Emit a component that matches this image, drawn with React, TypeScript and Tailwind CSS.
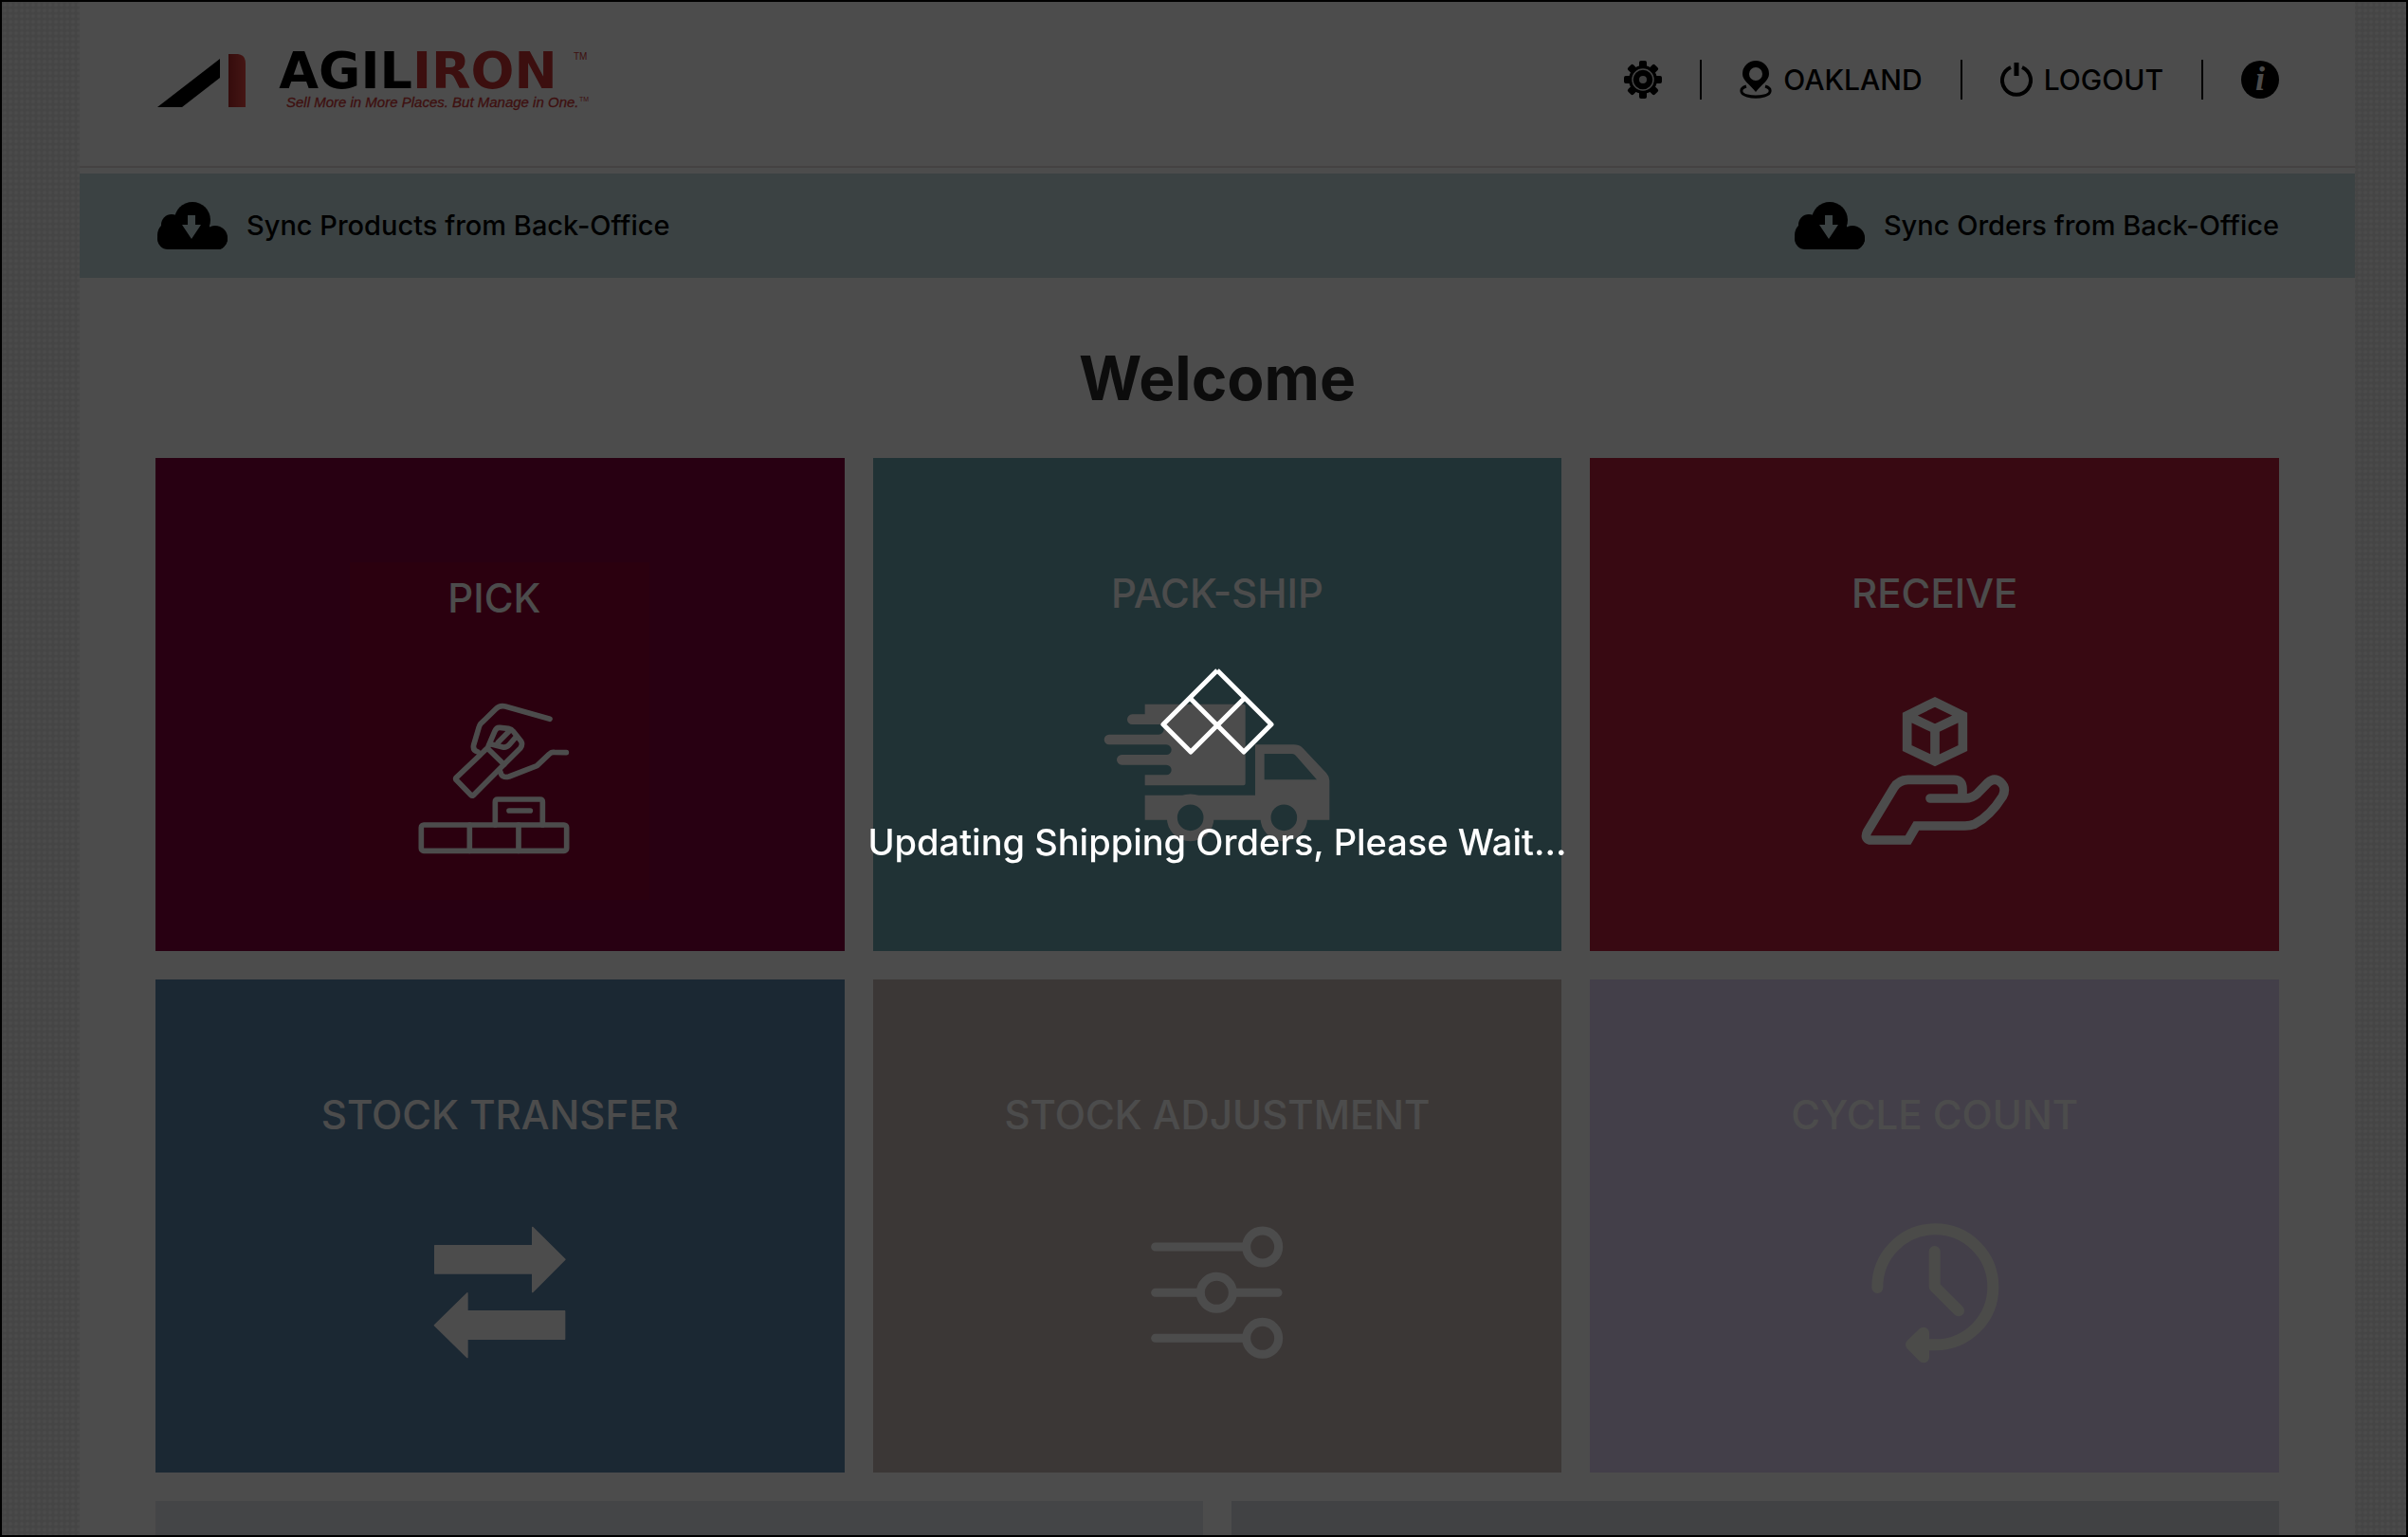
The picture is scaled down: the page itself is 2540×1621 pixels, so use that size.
import React from "react";

type Tile = {
    id: number;
    name: string;
    color: string;
    icon: React.ReactNode;
};

const CloudIcon = () => (
    <svg className="w-[76px] h-[50px]" viewBox="-2 0 76 50" aria-hidden="true">
        <circle cx="37" cy="19" r="19" />
        <circle cx="15" cy="24" r="11" />
        <circle cx="15" cy="35" r="15" />
        <circle cx="61" cy="38" r="13" />
        <rect x="0" y="28" width="74" height="22" rx="11" />
        <rect x="15" y="20" width="40" height="30" />
        <path d="M32 14H40V24H46L36 39L26 24H32Z" fill="#c5dcdf" />
    </svg>
);

const GearIcon = () => (
    <svg className="w-10 h-10" viewBox="0 0 40 40" aria-hidden="true">
        {[0, 45, 90, 135].map((deg) => (
            <rect key={deg} x="16" y="0" width="8" height="40" rx="2" transform={`rotate(${deg} 20 20)`} />
        ))}
        <circle cx="20" cy="20" r="15" />
        <circle cx="20" cy="20" r="11" fill="none" stroke="#e2e2e2" strokeWidth="1.5" />
        <circle cx="20" cy="20" r="4" fill="#d2d2d2" />
    </svg>
);

const PinIcon = () => (
    <svg className="w-[34px] h-10" viewBox="0 0 34 40" aria-hidden="true">
        <path d="M7 27C0 29 0 35 8 37C14 38.500 20 38.500 26 37C34 35 34 29 27 27" fill="none" stroke="#000" strokeWidth="3" />
        <path fillRule="evenodd" d="M17 0A14 14 0 0 1 31 14C31 21 23 25 17 33C11 25 3 21 3 14A14 14 0 0 1 17 0ZM17 7A7 7 0 1 0 17 21A7 7 0 1 0 17 7Z" />
    </svg>
);

const PowerIcon = () => (
    <svg className="w-[34px] h-9" viewBox="0 0 34 36" fill="none" stroke="#000" aria-hidden="true">
        <path d="M11 5A15 15 0 1 0 23 5" strokeWidth="4" />
        <path d="M17 0V14" strokeWidth="5" />
    </svg>
);

const InfoIcon = () => (
    <svg className="w-10 h-10" viewBox="0 0 40 40" aria-hidden="true">
        <circle cx="20" cy="20" r="20" />
        <text x="20" y="31" textAnchor="middle" fill="#fff" className="font-['Liberation_Serif',serif] font-bold italic text-[36px]">i</text>
    </svg>
);

const Logo = () => (
    <svg className="w-[460px] h-16 overflow-visible" viewBox="0 0 460 64" role="img" aria-label="Agiliron">
        <defs>
            <linearGradient id="bar" x1="0" x2="1" y1="0" y2="0">
                <stop offset="0" stopColor="#b02828" />
                <stop offset="1" stopColor="#e84c46" />
            </linearGradient>
        </defs>
        <path d="M2 61L68 10V30L28 61Z" />
        <path d="M77 5H87Q95 6 95 15V61H77Z" fill="url(#bar)" />
        <text x="277" y="41" textAnchor="middle" className="font-['DejaVu_Sans',sans-serif] font-bold text-[54px]">
            AGIL<tspan fill="#c83232">IRON</tspan>
        </text>
        <g className="font-['Liberation_Sans',sans-serif]" fill="#d03636">
            <text x="441" y="11" className="text-[10px]">TM</text>
            <text x="138" y="61" className="italic text-[15px]" stroke="#d03636" strokeWidth="0.3">Sell More in More Places. But Manage in One.</text>
            <text x="447" y="55" className="text-[7px]">TM</text>
        </g>
    </svg>
);

const PickIcon = () => (
    <svg className="w-40 h-40 overflow-visible" viewBox="304 477 480 480" fill="none" stroke="#fff" strokeWidth="17" strokeLinecap="round" strokeLinejoin="round" aria-hidden="true">
        <path d="M721 538L580 498Q562 494 550 506L502 553Q498 558 496 566L480 620Q476 638 493 642" />
        <path d="M523 630L424 724Q422 727 424 730L472 779Q475 782 479 779L576 682Z" />
        <path d="M565 706Q568 726 592 720L680 686L718 650Q725 642 735 643L773 644" />
        <path d="M527 622L547 576Q552 564 563 565L590 568Q600 570 605 577L630 608Q636 618 628 630L576 682" />
        <path d="M592 577L557 612M616 592L592 620Q584 629 572 627L537 618" />
        <rect x="314" y="873" width="460" height="82" rx="8" />
        <path d="M467 873V955M622 873V955M548 873V800Q548 792 556 792H690Q698 792 698 800V873M592 828H659" />
    </svg>
);

const TruckIcon = () => (
    <svg className="w-60 h-40" viewBox="193 219 720 480" fill="#fff" aria-hidden="true">
        <path d="M324 248H636Q642 248 642 254V499Q642 505 636 505H324V472H392A16 16 0 0 0 392 440H251A16 16 0 0 1 251 408H392A16 16 0 0 0 392 376H211A16 16 0 0 1 211 344H368A16 16 0 0 0 368 312H284A16 16 0 0 1 284 280H324Z" />
        <path fillRule="evenodd" d="M324 536H673V376H795Q811 376 823 386L898 466Q908 477 908 490V614H837A74 74 0 0 0 691 614H541A74 74 0 0 0 395 614H324ZM702 405V487H868L801 410Q797 405 790 405Z" />
        <g fill="none" stroke="#fff" strokeWidth="33">
            <circle cx="468" cy="607" r="58" />
            <circle cx="764" cy="607" r="58" />
        </g>
    </svg>
);

const ReceiveIcon = () => (
    <svg className="w-40 h-40" viewBox="180 459 480 480" fill="none" stroke="#fff" strokeWidth="29" aria-hidden="true">
        <path d="M420 481L508 524V627L420 669L332 627V524ZM332 524L420 566L508 524M420 566V669" />
        <path strokeLinecap="round" d="M405 786H515Q538 786 555 770L588 736Q608 718 628 735Q648 753 634 780Q595 842 545 868Q532 873 515 873H361L335 918H213Q196 912 206 891L290 752Q305 728 335 727H480Q507 727 507 757V784" />
    </svg>
);

const TransferIcon = () => (
    <svg className="w-40 h-40" viewBox="143 129 480 480" fill="#fff" stroke="#fff" strokeWidth="4" strokeLinejoin="round" aria-hidden="true">
        <path d="M178 221H487V163L590 265L487 368V309H178Z" />
        <path d="M589 428H281V371L177 473L281 575V517H589Z" />
    </svg>
);

const AdjustIcon = () => (
    <svg className="w-40 h-40" viewBox="72 69 480 480" fill="none" stroke="#fff" strokeWidth="27" strokeLinecap="round" aria-hidden="true">
        <path d="M116 165H392M116 310H248M372 310H504M116 454H392" />
        <circle cx="455" cy="165" r="51" />
        <circle cx="310" cy="310" r="51" />
        <circle cx="455" cy="454" r="51" />
    </svg>
);

const CycleIcon = () => (
    <svg className="w-40 h-40" viewBox="122 69 480 480" fill="none" stroke="#fbfbf6" strokeWidth="36" strokeLinecap="round" strokeLinejoin="round" aria-hidden="true">
        <path d="M180 294A183 183 0 1 1 363 475H300" />
        <path d="M326 437L287 474L326 514Z" fill="#fbfbf6" />
        <path d="M361 180V291L437 367" />
    </svg>
);

const tiles: Tile[] = [
    { id: 2, name: "PACK-SHIP", color: "bg-[#6ba7b1]", icon: <TruckIcon /> },
    { id: 3, name: "RECEIVE", color: "bg-[#bb213c]", icon: <ReceiveIcon /> },
    { id: 4, name: "STOCK TRANSFER", color: "bg-[#5d85aa]", icon: <TransferIcon /> },
    { id: 5, name: "STOCK ADJUSTMENT", color: "bg-[#c7b9b6]", icon: <AdjustIcon /> },
    { id: 6, name: "CYCLE COUNT", color: "bg-[#dfd2f3]", icon: <CycleIcon /> },
];

const Header = () => (
    <header className="flex items-start justify-between h-[175px] px-20 pt-[50px] border-b-2 border-[#e4dede]">
        <Logo />
        <nav className="flex items-center gap-10 h-16 text-[30px] font-medium">
            <button aria-label="Settings"><GearIcon /></button>
            <div className="w-[2px] h-[42px] bg-black" />
            <button className="flex items-center gap-3"><PinIcon />OAKLAND</button>
            <div className="w-[2px] h-[42px] bg-black" />
            <button className="flex items-center gap-3"><PowerIcon />LOGOUT</button>
            <div className="w-[2px] h-[42px] bg-black" />
            <button aria-label="Info"><InfoIcon /></button>
        </nav>
    </header>
);

const Loader = () => (
    <div role="status" className="fixed inset-0 flex flex-col items-center justify-center pl-[84px] pr-14 pb-1 bg-black/70 text-white">
        <svg className="w-[120px] h-[94px]" viewBox="0 0 120 94" fill="none" stroke="#fff" strokeWidth="5" strokeLinejoin="round" aria-hidden="true">
            <path d="M60 3L117 60L88 89L31 32M60 3L3 60L32 89L89 32" />
        </svg>
        <div className="mt-16 text-[38px] leading-[52px] font-medium">Updating Shipping Orders, Please Wait...</div>
    </div>
);

export default function App() {
    return (
        <div className="h-screen overflow-hidden border-2 border-black pl-[82px] pr-[54px] bg-[#ececec] bg-[radial-gradient(circle,#fbfbfb_0_1px,#e6e6e6_3px)] bg-[length:6px_6px] font-['Inter',sans-serif] text-black">
            <div className="min-h-full bg-white">
                <Header />
                <div className="flex items-center justify-between h-[110px] mt-[6px] px-20 bg-[#c5dcdf] text-[29px] font-medium">
                    <button className="flex items-center gap-5"><CloudIcon />Sync Products from Back-Office</button>
                    <button className="flex items-center gap-5"><CloudIcon />Sync Orders from Back-Office</button>
                </div>
                <main className="px-20 pt-[66px]">
                    <h1 className="mb-11 text-center text-[64px] leading-20 font-bold text-[#2b2b2b]">Welcome</h1>
                    <div className="grid grid-cols-3 gap-[30px] text-[42px] leading-12 font-medium text-white">
                        <button className="flex flex-col items-center h-[520px] pt-[110px] bg-[#85003c]">
                            <div className="flex flex-col items-center gap-[83px] w-[316px] h-[356px] pt-[14px] pr-3 bg-[#8f0032]">
                                <span>PICK</span>
                                <PickIcon />
                            </div>
                        </button>
                        {tiles.map((tile) => (
                            <button key={tile.id} className={`flex flex-col items-center gap-[83px] h-[520px] pt-[119px] ${tile.color}`}>
                                <span>{tile.name}</span>
                                {tile.icon}
                            </button>
                        ))}
                    </div>
                    <div className="grid grid-cols-2 gap-[30px] mt-[30px]">
                        <div className="h-[520px] bg-[#e3e6ed]" />
                        <div className="h-[520px] bg-[#dadde3]" />
                    </div>
                </main>
            </div>
            <Loader />
        </div>
    );
}
